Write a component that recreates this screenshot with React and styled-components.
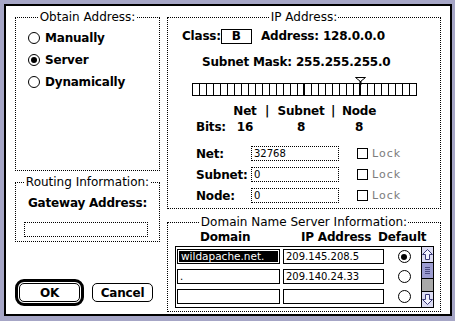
import styled, { createGlobalStyle } from 'styled-components';

const GlobalStyle = createGlobalStyle`
  html, body { margin: 0; padding: 0; }
  body {
    background: #a6a6c6;
    font-family: "DejaVu Sans", Verdana, sans-serif;
    color: #000;
  }
`;

const Window = styled.div`
  box-sizing: border-box;
  width: 448px;
  height: 312px;
  margin: 4px 3px 5px 4px;
  border: 2px solid #000;
  background: #fff;
  padding: 4px 0 0 9px;
  display: grid;
  grid-template-columns: 145px 274px;
  column-gap: 7px;
  align-items: start;
`;

const Column = styled.div`
  display: flex;
  flex-direction: column;
`;

const Group = styled.fieldset`
  box-sizing: border-box;
  margin: ${p => p.$top || 0}px 0 0 0;
  padding: 0;
  min-width: 0;
  border: 1px dotted #000;
  height: ${p => p.$h}px;
`;

const Title = styled.legend`
  margin: 0 auto;
  padding: 0 1px;
  font-size: 12px;
  line-height: 14px;
`;

const Bold = styled.span`
  font-weight: bold;
  font-size: 12px;
  letter-spacing: -0.2px;
  line-height: 14px;
  white-space: nowrap;
`;

const RadioList = styled.div`
  padding: 3px 0 0 12px;
`;

const RadioRow = styled.label`
  display: flex;
  align-items: center;
  gap: 5px;
  height: 22px;
`;

const RadioCircle = styled.span`
  box-sizing: border-box;
  flex: none;
  width: ${p => p.$size || 12}px;
  height: ${p => p.$size || 12}px;
  border-radius: 50%;
  border: 1px solid #000;
  display: grid;
  place-items: center;
  &::after {
    content: '';
    width: 6px;
    height: 6px;
    border-radius: 50%;
    background: ${p => (p.$on ? '#000' : 'transparent')};
  }
`;

const Centered = styled.div`
  text-align: center;
  margin-top: 3px;
`;

const TextBox = styled.div`
  box-sizing: border-box;
  width: ${p => p.$w}px;
  height: 15px;
  border: 1px dotted #000;
  font-size: 10px;
  line-height: 13px;
  padding: 0 2px;
  white-space: nowrap;
`;

const GatewayBox = styled(TextBox)`
  margin: 11px 0 0 8px;
`;

const ButtonRow = styled.div`
  display: flex;
  align-items: center;
  gap: 8px;
  margin-top: 37px;
`;

const DefaultRing = styled.div`
  box-sizing: border-box;
  width: 69px;
  height: 27px;
  border: 3px solid #000;
  border-radius: 9px;
  padding: 1px;
  display: flex;
`;

const Button = styled.button`
  box-sizing: border-box;
  width: 61px;
  height: 19px;
  border: 1px solid #000;
  border-radius: 5px;
  background: #fff;
  color: #000;
  padding: 0;
  font-family: "DejaVu Sans", Verdana, sans-serif;
  font-weight: bold;
  font-size: 12px;
  letter-spacing: -0.2px;
`;

const ClassRow = styled.div`
  display: flex;
  align-items: center;
  height: 16px;
  margin: 4px 0 0 14px;
`;

const ClassBox = styled.div`
  box-sizing: border-box;
  width: 31px;
  height: 15px;
  border: 1px solid #000;
  margin: 0 9px 0 0;
  text-align: center;
  font-weight: bold;
  font-size: 12px;
  line-height: 13px;
`;

const MaskLine = styled.div`
  margin: 11px 0 0 34px;
  height: 14px;
  display: flex;
`;

const BarWrap = styled.div`
  position: relative;
  margin: 8px 0 0 24px;
  padding-top: 6px;
  width: 225px;
`;

const Bar = styled.div`
  box-sizing: border-box;
  display: flex;
  width: 225px;
  height: 13px;
  border: 1px solid #000;
`;

const Cell = styled.span`
  width: ${p => (p.$thick ? 5 : 6)}px;
  flex: none;
  border-right: ${p => (p.$last ? 0 : p.$thick ? 2 : 1)}px solid #000;
`;

const Marker = styled.svg`
  position: absolute;
  left: 163px;
  top: 0;
`;

const BitsGrid = styled.div`
  display: grid;
  grid-template-columns: 34px 30px 14px 54px 10px 42px;
  row-gap: 2px;
  margin: 8px 0 0 28px;
  text-align: center;
  & > :first-child, & > :nth-child(7) { text-align: left; }
`;

const FieldList = styled.div`
  display: flex;
  flex-direction: column;
  gap: 6px;
  margin: 12px 0 0 28px;
`;

const FieldRow = styled.div`
  display: flex;
  align-items: center;
  height: 15px;
`;

const FieldLabel = styled(Bold)`
  width: 55px;
`;

const CheckBox = styled.span`
  box-sizing: border-box;
  width: 11px;
  height: 11px;
  border: 1px solid #000;
  margin-left: 18px;
`;

const LockText = styled.span`
  margin-left: 4px;
  font-size: 11px;
  letter-spacing: 1px;
  color: #7c7c7c;
`;

const DnsHeader = styled.div`
  display: flex;
  margin: 1px 0 0 32px;
  height: 14px;
`;

const HeadCell = styled(Bold)`
  width: ${p => p.$w}px;
  flex: none;
`;

const Table = styled.div`
  box-sizing: border-box;
  display: flex;
  width: 259px;
  height: 62px;
  margin: 2px 0 0 7px;
  border: 1px solid #000;
`;

const Rows = styled.div`
  display: grid;
  grid-template-columns: 103px 101px 34px;
  grid-auto-rows: 15px;
  column-gap: 3px;
  row-gap: 5px;
  padding: 2px 0 0 1px;
  align-items: center;
`;

const Field = styled.div`
  box-sizing: border-box;
  height: 15px;
  border: 1px solid #000;
  padding: ${p => (p.$selected ? 1 : 0)}px;
  font-size: 10px;
  line-height: 13px;
  white-space: nowrap;
  overflow: hidden;
`;

const Selection = styled.div`
  height: 11px;
  background: #000;
  color: #fff;
  font-size: 10.5px;
  line-height: 11px;
  padding-left: 2px;
`;

const FieldText = styled.span`
  padding-left: 2px;
`;

const RadioCell = styled.div`
  display: flex;
  justify-content: center;
`;

const Scrollbar = styled.div`
  display: flex;
  flex-direction: column;
  width: 15px;
  margin-left: auto;
  border-left: 1px solid #000;
`;

const ArrowBox = styled.div`
  box-sizing: border-box;
  height: 16px;
  background: #dcdcf4;
  border-${p => (p.$down ? 'top' : 'bottom')}: 1px solid #000;
  display: grid;
  place-items: center;
`;

const Thumb = styled.div`
  box-sizing: border-box;
  height: 16px;
  background: #9c9cd0;
  border-bottom: 1px solid #000;
  display: flex;
  flex-direction: column;
  justify-content: center;
  gap: 1px;
  padding: 0 3px;
`;

const Grip = styled.span`
  height: 1px;
  background: #4a4a80;
`;

const Track = styled.div`
  flex: 1;
  background-color: #c4c4c4;
  background-image: radial-gradient(#8a8a8a 0.6px, transparent 0.8px);
  background-size: 2px 2px;
`;

const Arrow = ({ down }) => (
  <svg width="11" height="11" viewBox="0 0 11 11" style={down ? { transform: 'rotate(180deg)' } : undefined}>
    <polygon points="5.5,0.5 10.5,5.5 7.5,5.5 7.5,10.5 3.5,10.5 3.5,5.5 0.5,5.5" fill="#f2f2ff" stroke="#3a3a78" strokeWidth="1" />
  </svg>
);

const radios = [
  { label: 'Manually', on: false },
  { label: 'Server', on: true },
  { label: 'Dynamically', on: false },
];

const fields = [
  { label: 'Net:', value: '32768' },
  { label: 'Subnet:', value: '0' },
  { label: 'Node:', value: '0' },
];

const servers = [
  { domain: 'wildapache.net.', ip: '209.145.208.5', selected: true, on: true },
  { domain: '.', ip: '209.140.24.33' },
  { domain: '', ip: '' },
];

const App = () => {
  const cells = Array.from({ length: 32 }, (_, i) => i + 1);

  return (
    <>
      <GlobalStyle />
      <Window>
        <Column>
          <Group $h={161}>
            <Title>Obtain Address:</Title>
            <RadioList>
              {radios.map(r => (
                <RadioRow key={r.label}>
                  <RadioCircle $on={r.on} />
                  <Bold>{r.label}</Bold>
                </RadioRow>
              ))}
            </RadioList>
          </Group>

          <Group $h={67} $top={4}>
            <Title>Routing Information:</Title>
            <Centered>
              <Bold>Gateway Address:</Bold>
            </Centered>
            <GatewayBox $w={124} />
          </Group>

          <ButtonRow>
            <DefaultRing>
              <Button>OK</Button>
            </DefaultRing>
            <Button>Cancel</Button>
          </ButtonRow>
        </Column>

        <Column>
          <Group $h={199}>
            <Title>IP Address:</Title>
            <ClassRow>
              <Bold>Class:</Bold>
              <ClassBox>B</ClassBox>
              <Bold>Address: 128.0.0.0</Bold>
            </ClassRow>
            <MaskLine>
              <Bold>Subnet Mask: 255.255.255.0</Bold>
            </MaskLine>
            <BarWrap>
              <Bar>
                {cells.map(n => (
                  <Cell key={n} $thick={n === 16 || n === 24} $last={n === 32} />
                ))}
              </Bar>
              <Marker width="11" height="8" viewBox="0 0 11 8">
                <path d="M0.5 0.5 H10.5 L5.5 4.5 Z" fill="#fff" stroke="#000" strokeWidth="1" />
                <rect x="4.5" y="4" width="2" height="4" fill="#000" />
              </Marker>
            </BarWrap>
            <BitsGrid>
              <Bold />
              <Bold>Net</Bold>
              <Bold>|</Bold>
              <Bold>Subnet</Bold>
              <Bold>|</Bold>
              <Bold>Node</Bold>
              <Bold>Bits:</Bold>
              <Bold>16</Bold>
              <Bold />
              <Bold>8</Bold>
              <Bold />
              <Bold>8</Bold>
            </BitsGrid>
            <FieldList>
              {fields.map(f => (
                <FieldRow key={f.label}>
                  <FieldLabel>{f.label}</FieldLabel>
                  <TextBox $w={88}>{f.value}</TextBox>
                  <CheckBox />
                  <LockText>Lock</LockText>
                </FieldRow>
              ))}
            </FieldList>
          </Group>

          <Group $h={97} $top={6}>
            <Title>Domain Name Server Information:</Title>
            <DnsHeader>
              <HeadCell $w={101}>Domain</HeadCell>
              <HeadCell $w={77}>IP Address</HeadCell>
              <HeadCell $w={50}>Default</HeadCell>
            </DnsHeader>
            <Table>
              <Rows>
                {servers.map((s, i) => [
                  <Field key={`d${i}`} $selected={s.selected}>
                    {s.selected ? <Selection>{s.domain}</Selection> : <FieldText>{s.domain}</FieldText>}
                  </Field>,
                  <Field key={`i${i}`}>
                    <FieldText>{s.ip}</FieldText>
                  </Field>,
                  <RadioCell key={`r${i}`}>
                    <RadioCircle $size={13} $on={s.on} />
                  </RadioCell>,
                ])}
              </Rows>
              <Scrollbar>
                <ArrowBox>
                  <Arrow />
                </ArrowBox>
                <Thumb>
                  <Grip />
                  <Grip />
                  <Grip />
                  <Grip />
                </Thumb>
                <Track />
                <ArrowBox $down>
                  <Arrow down />
                </ArrowBox>
              </Scrollbar>
            </Table>
          </Group>
        </Column>
      </Window>
    </>
  );
};

export default App;
